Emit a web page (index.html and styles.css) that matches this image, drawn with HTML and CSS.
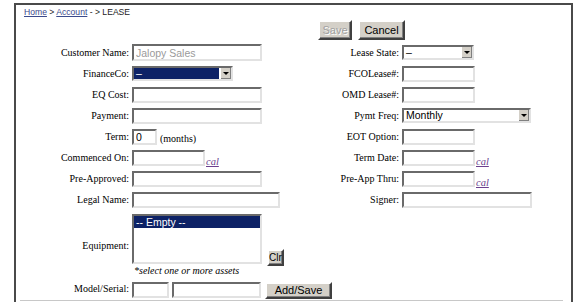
FILE: index.html
```html
<!DOCTYPE html>
<html>
  <head>
    <title>Lease</title>
    <link rel="stylesheet" href="styles.css">
  </head>
  <body>
    <div class="frame">
      <div class="crumbs"><a href="#">Home</a> &gt; <a href="#">Account</a> - &gt; LEASE</div>

      <div class="actions">
        <button class="btn btn-save" disabled>Save</button>
        <button class="btn btn-cancel">Cancel</button>
      </div>

      <div class="lease-form">
        <label class="lbl">Customer Name:</label>
        <div class="fld"><input class="txt w130 tall disabled" type="text" value="Jalopy Sales" readonly></div>
        <label class="lbl">Lease State:</label>
        <div class="fld">
          <div class="dropdown w72"><span class="dd-value">&ndash;</span><span class="dd-arrow"></span></div>
        </div>

        <label class="lbl">FinanceCo:</label>
        <div class="fld">
          <div class="dropdown w101 focused"><span class="dd-value">&ndash;</span><span class="dd-arrow"></span></div>
        </div>
        <label class="lbl">FCOLease#:</label>
        <div class="fld"><input class="txt w73" type="text"></div>

        <label class="lbl">EQ Cost:</label>
        <div class="fld"><input class="txt w130" type="text"></div>
        <label class="lbl">OMD Lease#:</label>
        <div class="fld"><input class="txt w73" type="text"></div>

        <label class="lbl">Payment:</label>
        <div class="fld"><input class="txt w130" type="text"></div>
        <label class="lbl">Pymt Freq:</label>
        <div class="fld">
          <div class="dropdown w129"><span class="dd-value">Monthly</span><span class="dd-arrow"></span></div>
        </div>

        <label class="lbl">Term:</label>
        <div class="fld"><input class="txt w25" type="text" value="0"><span class="hint">(months)</span></div>
        <label class="lbl">EOT Option:</label>
        <div class="fld"><input class="txt w73" type="text"></div>

        <label class="lbl">Commenced On:</label>
        <div class="fld"><input class="txt w73" type="text"><a class="cal" href="#">cal</a></div>
        <label class="lbl">Term Date:</label>
        <div class="fld"><input class="txt w73" type="text"><a class="cal" href="#">cal</a></div>

        <label class="lbl">Pre-Approved:</label>
        <div class="fld"><input class="txt w130" type="text"></div>
        <label class="lbl">Pre-App Thru:</label>
        <div class="fld"><input class="txt w73" type="text"><a class="cal" href="#">cal</a></div>

        <label class="lbl">Legal Name:</label>
        <div class="fld"><input class="txt w148" type="text"></div>
        <label class="lbl">Signer:</label>
        <div class="fld"><input class="txt w130" type="text"></div>

        <label class="lbl lbl-equip">Equipment:</label>
        <div class="fld-wide">
          <div class="equip">
            <div class="listbox"><div class="opt selected">-- Empty --</div></div>
            <button class="btn btn-small">Clr</button>
          </div>
          <div class="note">*select one or more assets</div>
        </div>

        <label class="lbl">Model/Serial:</label>
        <div class="fld-wide model">
          <input class="txt w37" type="text">
          <input class="txt w89" type="text">
          <button class="btn btn-add">Add/Save</button>
        </div>
      </div>

      <div class="rule"></div>
    </div>
  </body>
</html>
```

FILE: styles.css
```css
body {
  margin: 0;
  background-color: #fff;
  font-family: "Liberation Serif", "Times New Roman", serif;
  font-size: 10px;
  color: #000;
}

.frame {
  margin: 3px 0 0 14px;
  width: 555px;
  height: 297px;
  border: 2px solid #4a4a4a;
  border-bottom: none;
  display: flex;
  flex-direction: column;
}

.crumbs {
  padding: 2px 0 0 8px;
  height: 10px;
  line-height: 10px;
  font-family: "Liberation Sans", Arial, sans-serif;
  font-size: 8.6px;
  color: #222;
}

.crumbs a {
  color: #3b4a8c;
}

.actions {
  display: flex;
  gap: 6px;
  padding: 3px 0 0 302px;
  height: 20px;
}

.btn {
  font-family: "Liberation Sans", Arial, sans-serif;
  font-size: 11px;
  background-color: #d4d0c8;
  color: #000;
  border: 2px solid;
  border-color: #fff #404040 #404040 #fff;
  box-shadow: inset -1px -1px #808080;
  padding: 0;
  margin: 0;
}

.btn-save {
  width: 34px;
  height: 20px;
  color: #a0a0a0;
  text-shadow: 1px 1px #fff;
}

.btn-cancel {
  width: 47px;
  height: 20px;
}

.lease-form {
  display: grid;
  grid-template-columns: 116px 168px 102px 1fr;
  grid-template-rows: repeat(8, 21px) 67px 23px;
  margin-top: 2px;
}

.lbl {
  text-align: right;
  padding-right: 3px;
  align-self: center;
  white-space: nowrap;
}

.lbl-equip {
  padding-top: 4px;
}

.fld {
  display: flex;
  align-items: center;
}

.fld-wide {
  grid-column: 2 / 5;
}

.txt {
  box-sizing: border-box;
  height: 16px;
  margin: 0;
  padding: 0 2px;
  border: 2px solid;
  border-color: #6a6a6a #e2e2e2 #e2e2e2 #6a6a6a;
  font-family: "Liberation Sans", Arial, sans-serif;
  font-size: 10.5px;
  background: #fff;
  outline: none;
}

.tall {
  height: 17px;
}

.disabled {
  color: #9a9a9a;
  font-size: 10.5px;
}

.w25 { width: 25px; }
.w37 { width: 37px; }
.w72 { width: 72px; }
.w73 { width: 73px; }
.w89 { width: 89px; }
.w101 { width: 101px; }
.w129 { width: 129px; }
.w130 { width: 130px; }
.w148 { width: 148px; }

.hint {
  margin: 3px 0 0 3px;
}

.cal {
  font-style: italic;
  font-size: 10.5px;
  color: #6b3f8e;
  margin: 7px 0 0 1px;
  line-height: 9px;
}

.dropdown {
  box-sizing: border-box;
  height: 15px;
  display: flex;
  border: 2px solid;
  border-color: #6a6a6a #e2e2e2 #e2e2e2 #6a6a6a;
  background: #fff;
  font-family: "Liberation Sans", Arial, sans-serif;
  font-size: 10.5px;
  line-height: 11px;
}

.dd-value {
  flex: 1;
  padding-left: 2px;
}

.focused .dd-value {
  background: #0d2266;
  color: #fff;
  margin: 0 1px 0 0;
}

.dd-arrow {
  width: 10px;
  background: #d4d0c8;
  border-left: 1px solid #fff;
  box-shadow: inset -1px -1px #808080;
  position: relative;
}

.dd-arrow::after {
  content: "";
  position: absolute;
  left: 2px;
  top: 4px;
  border-left: 3px solid transparent;
  border-right: 3px solid transparent;
  border-top: 3px solid #000;
}

.equip {
  display: flex;
  align-items: flex-end;
  gap: 5px;
  padding-top: 4px;
}

.listbox {
  box-sizing: border-box;
  width: 130px;
  height: 50px;
  border: 2px solid;
  border-color: #6a6a6a #e2e2e2 #e2e2e2 #6a6a6a;
  font-family: "Liberation Sans", Arial, sans-serif;
  font-size: 10.5px;
}

.opt.selected {
  background: #0d2266;
  color: #fff;
  height: 12px;
  line-height: 12px;
  padding-left: 2px;
}

.btn-small {
  width: 17px;
  height: 17px;
  font-size: 10px;
  margin-bottom: -2px;
}

.note {
  font-style: italic;
  font-size: 10px;
  padding: 2px 0 0 2px;
  line-height: 10px;
}

.model {
  display: flex;
  align-items: center;
  gap: 3px;
  padding-top: 3px;
}

.btn-add {
  width: 67px;
  height: 17px;
  margin-left: 1px;
}

.rule {
  margin: 0 8px 0 4px;
  border-top: 1px solid #c8c8c8;
}
```
